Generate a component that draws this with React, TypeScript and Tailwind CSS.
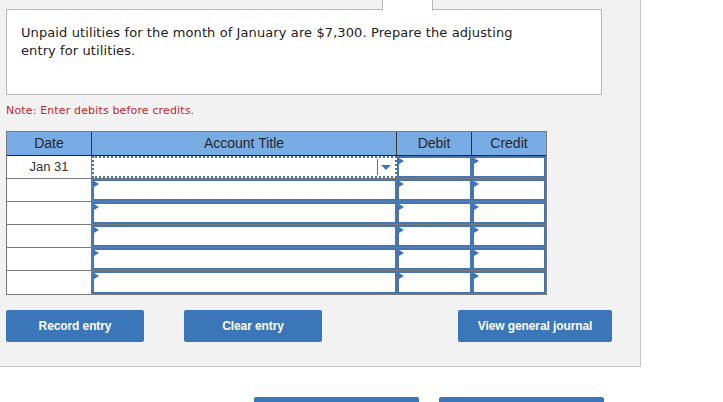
import React from "react";

const Tri = () => (
  <span className="absolute left-0 top-0 w-0 h-0 border-t-[3px] border-b-[3px] border-l-[5px] border-t-transparent border-b-transparent border-l-[#3b74b8]" />
);

const InputCell = ({ w }: { w: string }) => (
  <div className={`${w} h-full relative bg-white border-2 border-[#4676b1]`}>
    <Tri />
  </div>
);

export default function App() {
  const rows = [0, 1, 2, 3, 4, 5];
  return (
    <div className="w-[723px] h-[402px] bg-white overflow-hidden" style={{ fontFamily: '"DejaVu Sans", Verdana, sans-serif' }}>
      <div className="w-[641px] h-[367px] bg-[#f2f2f2] border-r border-b border-[#c4c4c4] pt-[9px] pl-[6px]">
        <div className="relative w-[596px] h-[86px] bg-white border border-[#b7b7b7] pl-[14px] pt-[14px] text-[13px] leading-[18px] tracking-[0.1px] text-[#222]">
          <div className="absolute left-[375px] top-[-10px] w-[51px] h-[11px] bg-white border-l border-r border-[#b7b7b7]" />
          Unpaid utilities for the month of January are $7,300. Prepare the adjusting
          <br />
          entry for utilities.
        </div>
        <div className="mt-[9px] text-[11px] leading-[14px] tracking-[0.15px] text-[#c0272d]">Note: Enter debits before credits.</div>
        <div
          className="mt-[13px] w-[541px] border border-[#7a7a7a] bg-white"
          style={{ fontFamily: '"Liberation Sans", Arial, sans-serif' }}
        >
          <div className="flex h-[24px] bg-[#78ace4] border-b border-[#222] text-[14px] text-[#262626] items-center">
            <div className="w-[85px] h-full flex items-center justify-center border-r border-[#333]">Date</div>
            <div className="w-[305px] h-full flex items-center justify-center border-r border-[#333]">Account Title</div>
            <div className="w-[75px] h-full flex items-center justify-center border-r border-[#333]">Debit</div>
            <div className="w-[74px] h-full flex items-center justify-center">Credit</div>
          </div>
          {rows.map((r) => (
            <div key={r} className={`flex h-[23px] ${r < 5 ? "border-b border-[#7a7a7a]" : ""}`}>
              <div className="w-[85px] h-full flex items-center justify-center border-r border-[#7a7a7a] text-[13px] text-[#333]">
                {r === 0 ? "Jan 31" : ""}
              </div>
              {r === 0 ? (
                <div className="w-[305px] h-full relative bg-white border-2 border-dotted border-[#3b74b8]">
                  <div className="absolute right-[17px] top-[1px] h-[16px] w-px bg-[#4a7ab5]" />
                  <div className="absolute right-[4px] top-[7px] w-0 h-0 border-l-[5px] border-r-[5px] border-t-[5px] border-l-transparent border-r-transparent border-t-[#3b74b8]" />
                </div>
              ) : (
                <InputCell w="w-[305px]" />
              )}
              <InputCell w="w-[75px]" />
              <InputCell w="w-[74px]" />
            </div>
          ))}
        </div>
        <div
          className="mt-[15px] flex text-[12px] font-bold text-white tracking-[-0.1px]"
          style={{ fontFamily: '"Liberation Sans", Arial, sans-serif' }}
        >
          <button className="w-[138px] h-[32px] bg-[#3a76b8] rounded-[2px]">Record entry</button>
          <button className="ml-[40px] w-[138px] h-[32px] bg-[#3a76b8] rounded-[2px]">Clear entry</button>
          <button className="ml-[136px] w-[154px] h-[32px] bg-[#3a76b8] rounded-[2px]">View general journal</button>
        </div>
      </div>
      <div className="mt-[30px] flex pl-[254px] gap-[20px]">
        <div className="w-[165px] h-[10px] bg-[#3a76b8] rounded-t-[2px]" />
        <div className="w-[165px] h-[10px] bg-[#3a76b8] rounded-t-[2px]" />
      </div>
    </div>
  );
}
